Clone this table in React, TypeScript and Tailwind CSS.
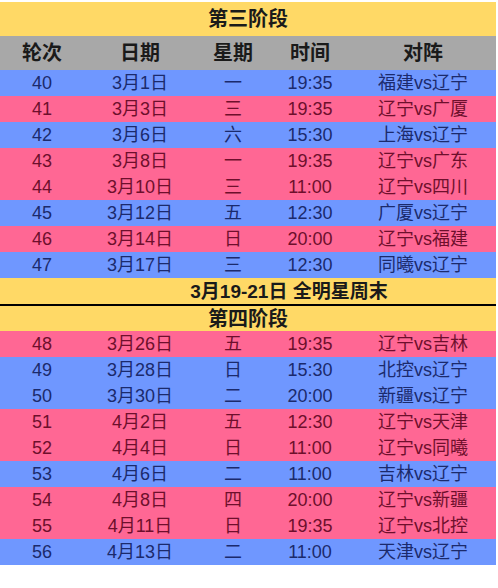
type Game = {
  round: number
  date: string
  weekday: string
  time: string
  match: string
  home: boolean
}

const stage3: Game[] = [
  { round: 40, date: '3月1日', weekday: '一', time: '19:35', match: '福建vs辽宁', home: false },
  { round: 41, date: '3月3日', weekday: '三', time: '19:35', match: '辽宁vs广厦', home: true },
  { round: 42, date: '3月6日', weekday: '六', time: '15:30', match: '上海vs辽宁', home: false },
  { round: 43, date: '3月8日', weekday: '一', time: '19:35', match: '辽宁vs广东', home: true },
  { round: 44, date: '3月10日', weekday: '三', time: '11:00', match: '辽宁vs四川', home: true },
  { round: 45, date: '3月12日', weekday: '五', time: '12:30', match: '广厦vs辽宁', home: false },
  { round: 46, date: '3月14日', weekday: '日', time: '20:00', match: '辽宁vs福建', home: true },
  { round: 47, date: '3月17日', weekday: '三', time: '12:30', match: '同曦vs辽宁', home: false },
]

const stage4: Game[] = [
  { round: 48, date: '3月26日', weekday: '五', time: '19:35', match: '辽宁vs吉林', home: true },
  { round: 49, date: '3月28日', weekday: '日', time: '15:30', match: '北控vs辽宁', home: false },
  { round: 50, date: '3月30日', weekday: '二', time: '20:00', match: '新疆vs辽宁', home: false },
  { round: 51, date: '4月2日', weekday: '五', time: '12:30', match: '辽宁vs天津', home: true },
  { round: 52, date: '4月4日', weekday: '日', time: '11:00', match: '辽宁vs同曦', home: true },
  { round: 53, date: '4月6日', weekday: '二', time: '11:00', match: '吉林vs辽宁', home: false },
  { round: 54, date: '4月8日', weekday: '四', time: '20:00', match: '辽宁vs新疆', home: true },
  { round: 55, date: '4月11日', weekday: '日', time: '19:35', match: '辽宁vs北控', home: true },
  { round: 56, date: '4月13日', weekday: '二', time: '11:00', match: '天津vs辽宁', home: false },
]

const cols = 'grid grid-cols-[84px_112px_74px_80px_1fr] items-center'

function Row({ g }: { g: Game }) {
  return (
    <div
      className={`${cols} h-[26px] text-[18px] ${
        g.home ? 'bg-[#ff6794] text-[#6e0f2c]' : 'bg-[#6f97ff] text-[#1b2a6c]'
      }`}
    >
      <div className="text-center">{g.round}</div>
      <div className="text-center">{g.date}</div>
      <div className="text-center">{g.weekday}</div>
      <div className="text-center">{g.time}</div>
      <div className="text-center">{g.match}</div>
    </div>
  )
}

export default function App() {
  return (
    <div className="w-[498px] h-[588px] bg-white pt-[2px] pr-[2px] font-['Liberation_Sans','Noto_Sans_CJK_SC',sans-serif] leading-none">
      <div className="h-[34px] bg-[#ffd966] flex items-center justify-center text-[20px] font-bold text-[#1a1a1a]">
        第三阶段
      </div>
      <div className={`${cols} h-[34px] bg-[#a8a8a8] text-[20px] font-bold text-[#1a1a1a]`}>
        <div className="text-center">轮次</div>
        <div className="text-center">日期</div>
        <div className="text-center">星期</div>
        <div className="text-center">时间</div>
        <div className="text-center">对阵</div>
      </div>
      {stage3.map((g) => (
        <Row key={g.round} g={g} />
      ))}
      {/* merged cell in the sheet, text sits right of centre */}
      <div className="h-[28px] bg-[#ffd966] border-b-2 border-black flex items-center justify-center pl-[82px] text-[19px] font-bold text-[#1a1a1a]">
        3月19-21日 全明星周末
      </div>
      <div className="h-[25px] bg-[#ffd966] flex items-center justify-center text-[20px] font-bold text-[#1a1a1a]">
        第四阶段
      </div>
      {stage4.map((g) => (
        <Row key={g.round} g={g} />
      ))}
    </div>
  )
}
